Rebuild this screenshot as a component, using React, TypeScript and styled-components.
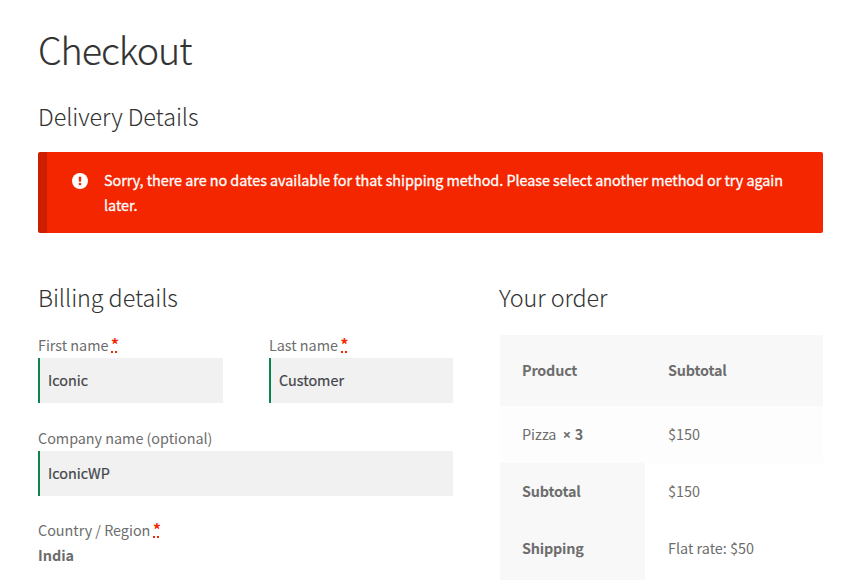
import React from 'react';
import styled, { createGlobalStyle } from 'styled-components';

const GlobalStyle = createGlobalStyle`
  * { box-sizing: border-box; }
  body {
    margin: 0;
    background: #fff;
    color: #6d6d6d;
    font: 400 14.4px/25px "Noto Sans CJK SC", "Open Sans", sans-serif;
  }
`;

const Page = styled.main`
  height: 580px;
  overflow: hidden;
  padding: 21px 34px 0 38px;
`;

const Title = styled.h1`
  margin: 0;
  height: 56px;
  color: #333;
  font-size: 37.7px;
  font-weight: 300;
  line-height: 56px;
  letter-spacing: -1.05px;
  -webkit-text-stroke: 0.15px;
`;

const Heading = styled.h2<{ $nudge?: boolean }>`
  margin: 0;
  margin-left: ${(p) => (p.$nudge ? '-1px' : 0)};
  color: #333;
  font-size: 23.4px;
  font-weight: 300;
  line-height: 32px;
  letter-spacing: -0.08px;
`;

const Delivery = styled.section`
  padding-top: 23px;
`;

const Notice = styled.div`
  display: flex;
  height: 81px;
  margin-top: 20px;
  padding: 15px 0 0 25px;
  border-left: 9px solid #cc1f00;
  border-radius: 2px;
  background: #f42600;
  color: #fff;
  letter-spacing: -0.045px;
  -webkit-text-stroke: 0.3px;

  svg {
    flex: none;
    margin-top: 6px;
  }
`;

const NoticeText = styled.p`
  margin: 0 0 0 16px;
  width: 700px;
`;

const Columns = styled.div`
  display: flex;
  justify-content: space-between;
  padding-top: 48px;
`;

const Billing = styled.section`
  width: 415px;
`;

const Order = styled.section`
  width: 323px;
`;

const Fields = styled.div`
  display: grid;
  grid-template-columns: 185px 184px;
  column-gap: 46px;
  row-gap: 22px;
  margin-top: 19px;
`;

const Field = styled.div<{ $wide?: boolean }>`
  grid-column: ${(p) => (p.$wide ? '1 / -1' : 'auto')};
`;

const CountryField = styled(Field)`
  margin-top: -1px;
`;

const Label = styled.label<{ $input?: boolean }>`
  display: block;
  height: ${(p) => (p.$input ? 26 : 25)}px;
  letter-spacing: -0.03px;
`;

const Required = styled.abbr`
  color: #f42600;
  font-size: 15.5px;
  font-weight: 700;
  text-decoration: none;
  display: inline-block;
  width: 6px;
  height: 17px;
  line-height: 17px;
  border-bottom: 2px dotted #f42600;
  vertical-align: top;
  margin: 4px 0 0 -0.5px;
`;

const Input = styled.input`
  display: block;
  width: 100%;
  height: 45px;
  padding: 0 8px 2px;
  border: 0;
  border-left: 2px solid #0f834d;
  border-radius: 0;
  background: #f1f1f1;
  color: #43454b;
  font: inherit;
  outline: 0;
  -webkit-text-stroke: 0.2px;
`;

const Table = styled.table`
  width: 100%;
  margin-top: 22px;
  border-collapse: collapse;
  table-layout: fixed;
  text-align: left;

  th, td { padding: 0 0 3px 23px; }
  th { font-weight: 700; letter-spacing: -0.2px; }
  th:first-child { width: 145px; }
  th:first-child, td:first-child { padding-left: 22px; }
`;

const HeadRow = styled.tr`
  height: 71px;
  background: #f8f8f8;
`;

const ItemRow = styled.tr`
  height: 57px;
  background: #fdfdfd;
`;

const TotalRow = styled.tr`
  height: 57px;
  th { background: #f8f8f8; }
`;

const Quantity = styled.strong`
  margin-left: 3px;
  font-family: "Open Sans", sans-serif;
  font-size: 14.4px;
  line-height: 20px;

  span { font-family: "Noto Sans CJK SC", sans-serif; }
`;

function TextField({ label, value, required, wide }: { label: string; value: string; required?: boolean; wide?: boolean }) {
  return (
    <Field $wide={wide}>
      <Label $input>{label} {required && <Required title="required">*</Required>}</Label>
      <Input defaultValue={value} aria-label={label} />
    </Field>
  );
}

export default function App() {
  return (
    <Page>
      <GlobalStyle />
      <Title>Checkout</Title>
      <Delivery>
        <Heading>Delivery Details</Heading>
        <Notice role="alert">
          <svg width="16" height="16" viewBox="0 0 16 16">
            <circle cx="8" cy="8" r="8" fill="#fff" />
            <path d="M6.7 3.8h2.6L9 8.8H7z" fill="#f42600" />
            <rect x="6.8" y="10" width="2.4" height="2.2" rx=".4" fill="#f42600" />
          </svg>
          <NoticeText>
            Sorry, there are no dates available for that shipping method. Please select another method or try again later.
          </NoticeText>
        </Notice>
      </Delivery>
      <Columns>
        <Billing>
          <Heading>Billing details</Heading>
          <Fields>
            <TextField label="First name" value="Iconic" required />
            <TextField label="Last name" value="Customer" required />
            <TextField label="Company name (optional)" value="IconicWP" wide />
            <CountryField $wide>
              <Label>Country / Region <Required title="required">*</Required></Label>
              <strong>India</strong>
            </CountryField>
          </Fields>
        </Billing>
        <Order>
          <Heading $nudge>Your order</Heading>
          <Table>
            <thead>
              <HeadRow><th>Product</th><th>Subtotal</th></HeadRow>
            </thead>
            <tbody>
              <ItemRow><td>Pizza <Quantity>× <span>3</span></Quantity></td><td>$150</td></ItemRow>
              <TotalRow><th>Subtotal</th><td>$150</td></TotalRow>
              <TotalRow><th>Shipping</th><td>Flat rate: $50</td></TotalRow>
              <TotalRow><th /><td /></TotalRow>
            </tbody>
          </Table>
        </Order>
      </Columns>
    </Page>
  );
}
